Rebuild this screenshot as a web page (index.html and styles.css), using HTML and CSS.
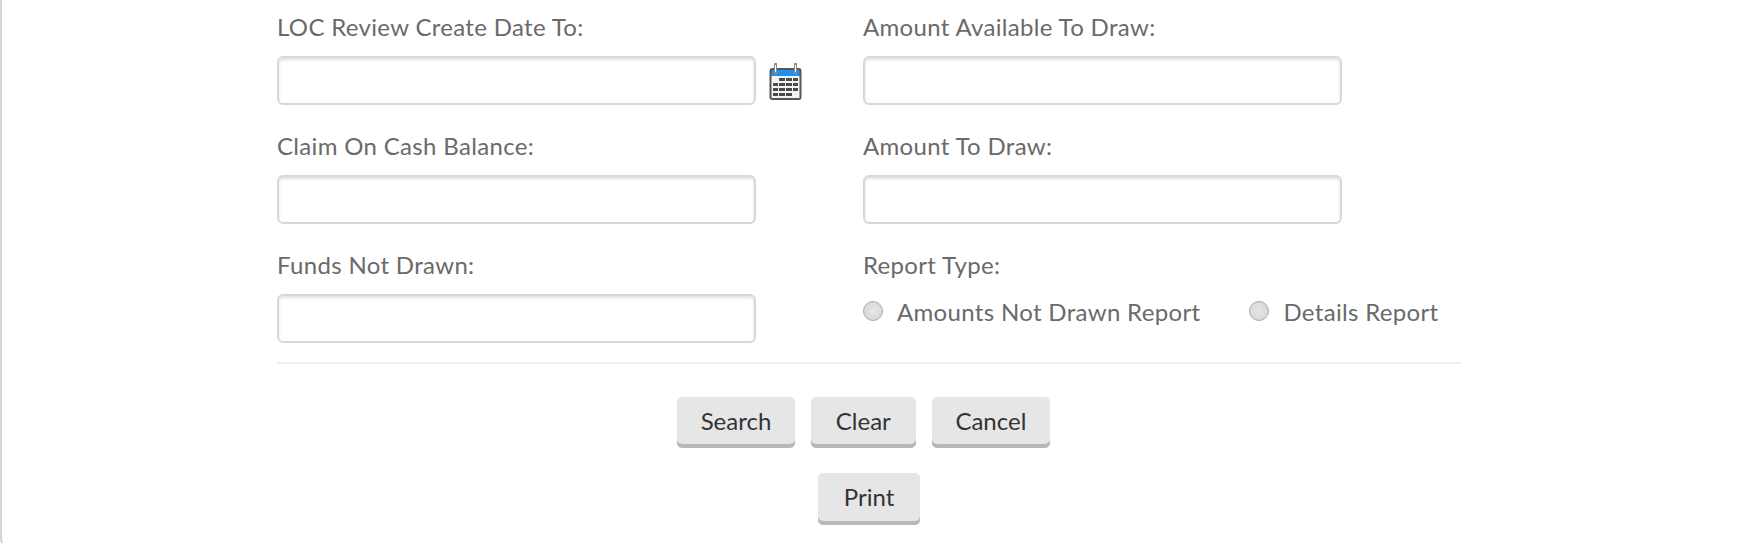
FILE: index.html
```html
<!DOCTYPE html>
<html lang="en">
<head>
  <meta charset="UTF-8">
  <title>LOC Review Search</title>
  <link rel="stylesheet" href="styles.css">
</head>
<body>
  <div class="panel">
    <form class="search-form">
      <div class="fields">
        <div class="field">
          <label>LOC Review Create Date To:</label>
          <div class="date-wrap">
            <input type="text">
            <svg class="cal-icon" width="33" height="38" viewBox="0 0 33 38">
              <rect x="0.5" y="5" width="32" height="32" rx="3" fill="#555"/>
              <rect x="2.5" y="7" width="28" height="6" fill="#1e90ee"/>
              <rect x="2.5" y="13" width="28" height="22" fill="#f4f4f4"/>
              <path d="M6.5 1v9M26.5 1v9" stroke="#8a8a8a" stroke-width="3" stroke-linecap="round" fill="none"/>
              <path d="M6.5 2v7M26.5 2v7" stroke="#fff" stroke-width="1" fill="none"/>
              <g fill="#4a4a4a">
                <rect x="10" y="15" width="6" height="3"/><rect x="17" y="15" width="6" height="3"/><rect x="24" y="15" width="5" height="3"/>
                <rect x="4" y="20" width="5" height="3"/><rect x="10" y="20" width="6" height="3"/><rect x="17" y="20" width="6" height="3"/><rect x="24" y="20" width="5" height="3"/>
                <rect x="4" y="25" width="5" height="3"/><rect x="10" y="25" width="6" height="3"/><rect x="17" y="25" width="6" height="3"/><rect x="24" y="25" width="5" height="3"/>
                <rect x="4" y="30" width="5" height="3"/><rect x="10" y="30" width="6" height="3"/><rect x="17" y="30" width="6" height="3"/>
              </g>
            </svg>
          </div>
        </div>
        <div class="field">
          <label>Amount Available To Draw:</label>
          <input type="text">
        </div>
        <div class="field">
          <label>Claim On Cash Balance:</label>
          <input type="text">
        </div>
        <div class="field">
          <label>Amount To Draw:</label>
          <input type="text">
        </div>
        <div class="field">
          <label>Funds Not Drawn:</label>
          <input type="text">
        </div>
        <div class="field">
          <label>Report Type:</label>
          <div class="radios">
            <span class="radio-item"><span class="radio"></span>Amounts Not Drawn Report</span>
            <span class="radio-item"><span class="radio"></span>Details Report</span>
          </div>
        </div>
      </div>
      <hr>
      <div class="buttons first-row">
        <button type="button">Search</button>
        <button type="button" class="btn-clear">Clear</button>
        <button type="button">Cancel</button>
      </div>
      <div class="buttons">
        <button type="button" class="btn-print">Print</button>
      </div>
    </form>
  </div>
</body>
</html>
```
FILE: styles.css
```css
html, body { margin: 0; height: 543px; overflow: hidden; background: #fff; }
body { font-family: Lato, sans-serif; color: #6a6a6a; }
.panel { height: 547px; box-sizing: border-box; border: 2px solid #d4d4d4; border-top: none; border-right-color: #fff; border-bottom-color: #fff; border-radius: 0 0 8px 8px; padding: 0 0 0 275px; }
.search-form { width: 1184px; }
.fields { display: grid; grid-template-columns: 586px 1fr; grid-auto-rows: 119px; }
.field label { display: block; font-size: 24px; letter-spacing: 0.33px; line-height: 30px; padding-top: 12px; margin-bottom: 14px; }
input[type=text] { display: block; width: 479px; height: 49px; box-sizing: border-box; border: 2px solid #d8d8d8; border-radius: 6px; background: #fff; box-shadow: inset 0 2px 3px rgba(0,0,0,0.12); }
.date-wrap { display: flex; align-items: center; gap: 13px; }
.cal-icon { margin-top: 3px; }
.radios { display: flex; gap: 49px; font-size: 24px; letter-spacing: 0.33px; line-height: 30px; margin-top: 17px; }
.radio-item { display: flex; align-items: center; }
.radio { width: 20px; height: 20px; box-sizing: border-box; margin-right: 14px; margin-top: -2px; border: 1px solid #aaa; border-radius: 50%; background: radial-gradient(circle, #e6e6e6, #d4d4d4); }
hr { border: none; border-top: 2px solid #eee; margin: 5px 0 33px; }
.buttons { display: flex; justify-content: center; gap: 16px; margin-bottom: 25px; }
.first-row { padding-right: 11px; }
button { font-family: Lato, sans-serif; font-size: 24px; height: 51px; padding: 0 23.5px 5px; color: #333; background: #e6e6e6; border: none; border-radius: 5px; box-shadow: inset 0 -4px 0 #b8b8b8; }
.btn-clear { padding: 0 25px 5px; }
.btn-print { height: 52px; padding: 0 25.5px 5px; }
```
